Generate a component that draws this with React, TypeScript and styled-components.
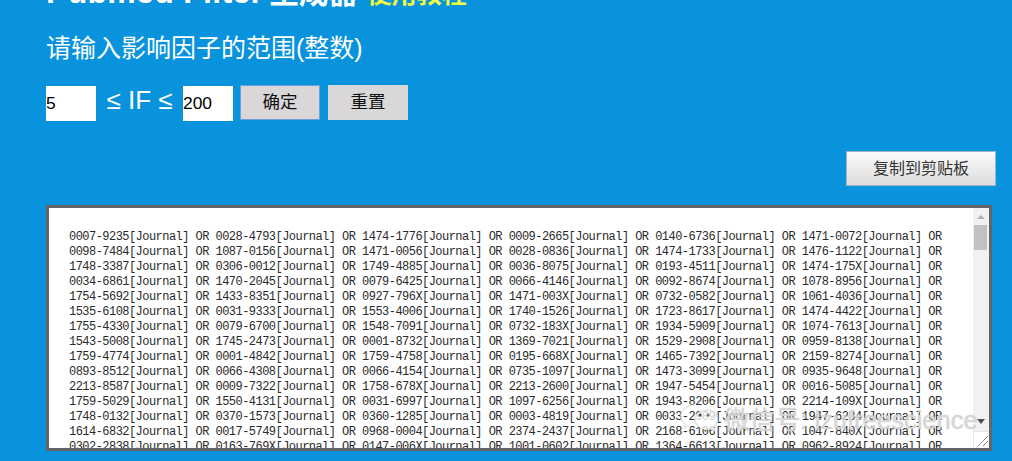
import React from "react";
import styled, { createGlobalStyle } from "styled-components";

const Global = createGlobalStyle`
  html, body { margin: 0; padding: 0; background: #0993dd; }
  * { box-sizing: border-box; }
`;

const Page = styled.div`
  width: 1012px;
  height: 461px;
  overflow: hidden;
  background: #0993dd;
  padding-left: 46px;
  font-family: "Liberation Sans", "Noto Sans CJK SC", sans-serif;
  color: #fff;
`;

const Title = styled.h1`
  margin: -24px 0 0;
  height: 32px;
  line-height: 32px;
  font-size: 32px;
  letter-spacing: 0.3px;
  font-weight: 700;
  white-space: nowrap;
`;

const TitleCn = styled.span`
  margin-left: 6px;
  font-size: 29.5px;
  letter-spacing: 0;
`;

const TutorialLink = styled.a`
  color: #f2ff3a;
  font-size: 25px;
  letter-spacing: 0;
  margin-left: 9px;
`;

const Prompt = styled.h2`
  margin: 25px 0 0;
  height: 30px;
  line-height: 30px;
  font-size: 25px;
  font-weight: 400;
  white-space: nowrap;
`;

const RangeRow = styled.div`
  display: flex;
  align-items: flex-start;
  margin-top: 22px;
  height: 36px;
`;

const NumberInput = styled.div`
  width: 50px;
  height: 35px;
  margin-top: 1px;
  background: #fff;
  color: #000;
  font-size: 17.4px;
  line-height: 35px;
`;

const RangeLabel = styled.span`
  width: 87px;
  text-align: center;
  font-size: 26px;
  line-height: 30px;
`;

const ActionButton = styled.div<{ $focused?: boolean }>`
  width: 80px;
  height: 35px;
  margin-left: ${(p) => (p.$focused ? "7px" : "8px")};
  background: #d9d7d8;
  border: ${(p) => (p.$focused ? "1.5px solid #6c9fe0" : "none")};
  color: #111;
  font-size: 17.5px;
  line-height: ${(p) => (p.$focused ? "32px" : "35px")};
  text-align: center;
`;

const CopyRow = styled.div`
  display: flex;
  justify-content: flex-end;
  margin-top: 30px;
  padding-right: 16px;
`;

const CopyButton = styled.div`
  width: 150px;
  height: 35px;
  border: 1px solid #9fb4c4;
  background: linear-gradient(#fbfbfb, #dcdcdc);
  color: #333;
  font-size: 16px;
  line-height: 33px;
  text-align: center;
`;

const Output = styled.div`
  position: relative;
  display: flex;
  width: 946px;
  height: 246px;
  margin-top: 19px;
  border: 3px solid #646464;
  background: #fff;
  overflow: hidden;
`;

const OutputText = styled.div`
  flex: 1;
  padding: 22px 0 0 20px;
  color: #2a2a2a;
  font-family: "Liberation Mono", monospace;
  font-size: 12px;
  letter-spacing: -0.54px;
  line-height: 15px;
  white-space: pre;
`;

const Scrollbar = styled.div`
  position: relative;
  width: 16px;
  background: #f1f1f1;
`;

const ScrollThumb = styled.div`
  position: absolute;
  top: 17px;
  left: 1px;
  width: 13px;
  height: 25px;
  background: #c1c1c1;
`;

const ArrowUp = styled.div`
  position: absolute;
  top: 7px;
  left: 4px;
  border: 4px solid transparent;
  border-top: 0;
  border-bottom: 4px solid #b0b0b0;
`;

const ArrowDown = styled.div`
  position: absolute;
  bottom: 24px;
  left: 4px;
  border: 4px solid transparent;
  border-bottom: 0;
  border-top: 5px solid #505050;
`;

const Resizer = styled.div`
  position: absolute;
  right: 0;
  bottom: 0;
  width: 16px;
  height: 17px;
  background: #fff;
  border-left: 1px solid #e6e6e6;
  border-top: 1px solid #e6e6e6;
`;

const Watermark = styled.div`
  position: absolute;
  left: 677px;
  top: 402px;
  display: flex;
  align-items: center;
  gap: 5px;
  height: 30px;
  color: rgba(215, 215, 215, 0.85);
  font-size: 25.5px;
  white-space: nowrap;
  text-shadow: 0 0 2px rgba(255, 255, 255, 0.7), 0 0 1px rgba(110, 110, 110, 0.6);
`;

const ISSN: string[][] = [
  ["0007-9235", "0028-4793", "1474-1776", "0009-2665", "0140-6736", "1471-0072"],
  ["0098-7484", "1087-0156", "1471-0056", "0028-0836", "1474-1733", "1476-1122"],
  ["1748-3387", "0306-0012", "1749-4885", "0036-8075", "0193-4511", "1474-175X"],
  ["0034-6861", "1470-2045", "0079-6425", "0066-4146", "0092-8674", "1078-8956"],
  ["1754-5692", "1433-8351", "0927-796X", "1471-003X", "0732-0582", "1061-4036"],
  ["1535-6108", "0031-9333", "1553-4006", "1740-1526", "1723-8617", "1474-4422"],
  ["1755-4330", "0079-6700", "1548-7091", "0732-183X", "1934-5909", "1074-7613"],
  ["1543-5008", "1745-2473", "0001-8732", "1369-7021", "1529-2908", "0959-8138"],
  ["1759-4774", "0001-4842", "1759-4758", "0195-668X", "1465-7392", "2159-8274"],
  ["0893-8512", "0066-4308", "0066-4154", "0735-1097", "1473-3099", "0935-9648"],
  ["2213-8587", "0009-7322", "1758-678X", "2213-2600", "1947-5454", "0016-5085"],
  ["1759-5029", "1550-4131", "0031-6997", "1097-6256", "1943-8206", "2214-109X"],
  ["1748-0132", "0370-1573", "0360-1285", "0003-4819", "0033-2909", "1947-6234"],
  ["1614-6832", "0017-5749", "0968-0004", "2374-2437", "2168-6106", "1047-840X"],
  ["0302-2838", "0163-769X", "0147-006X", "1001-0602", "1364-6613", "0962-8924"],
];

const text = ISSN.map((r) => r.map((i) => `${i}[Journal] OR`).join(" ")).join("\n");

const WeChatMark = () => (
  <svg width="42" height="30" viewBox="0 0 42 30" fill="none" stroke="rgba(225,225,225,.9)" strokeWidth="1.5">
    <path d="M18 3C10 3 4 8 4 14c0 3.200 1.700 6 4.500 8l-1 3.500 4-2" />
    <path d="M30 8c-7 0-12 4.200-12 9.500S23 27 30 27c1.300 0 2.500-.2 3.500-.5l3.500 1.800-1-3.200c2.500-1.800 4.500-4.600 4.500-8.100C40.500 12.200 37 8 30 8Z" fill="rgba(255,255,255,.75)" />
    <circle cx="23" cy="13" r="1.500" fill="#444" stroke="none" />
    <circle cx="31" cy="13" r="1.500" fill="#777" stroke="none" />
  </svg>
);

export default function App() {
  return (
    <Page>
      <Global />
      <Title>
        Pubmed Filter<TitleCn>生成器</TitleCn>
        <TutorialLink>使用教程</TutorialLink>
      </Title>
      <Prompt>请输入影响因子的范围(整数)</Prompt>
      <RangeRow>
        <NumberInput>5</NumberInput>
        <RangeLabel>≤ IF ≤</RangeLabel>
        <NumberInput>200</NumberInput>
        <ActionButton $focused>确定</ActionButton>
        <ActionButton>重置</ActionButton>
      </RangeRow>
      <CopyRow>
        <CopyButton>复制到剪贴板</CopyButton>
      </CopyRow>
      <Output>
        <OutputText>{text}</OutputText>
        <Scrollbar>
          <ArrowUp />
          <ScrollThumb />
          <ArrowDown />
        </Scrollbar>
        <Resizer>
          <svg width="15" height="15" viewBox="0 0 15 15" stroke="#8a8a8a" strokeWidth="1">
            <path d="M4 14 14 4M9 14l5-5" />
          </svg>
        </Resizer>
      </Output>
      <Watermark>
        <WeChatMark />
        微信号: lzufreescience
      </Watermark>
    </Page>
  );
}
